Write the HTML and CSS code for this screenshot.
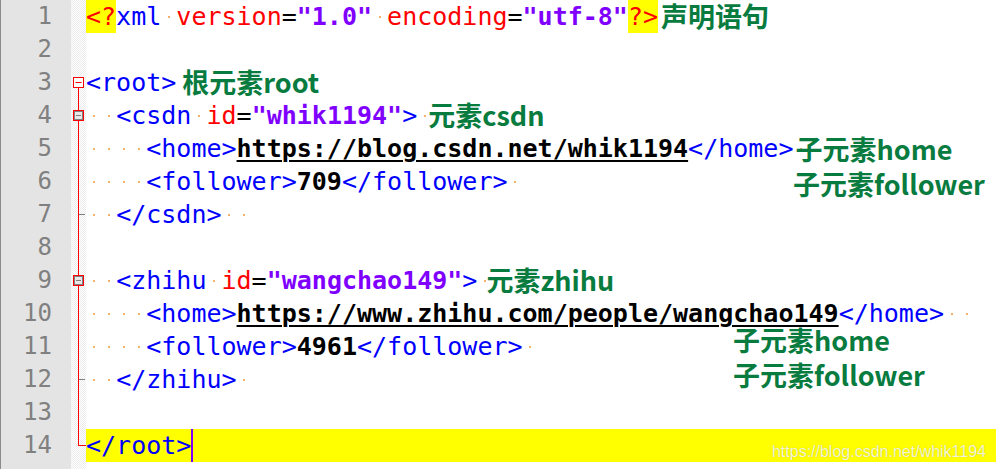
FILE: index.html
```html
<!DOCTYPE html>
<html lang="zh-CN">
<head>
<meta charset="utf-8">
<title>XML</title>
<link rel="stylesheet" href="styles.css">
</head>
<body>
<div class="editor">
  <div class="gutter">
    <div class="ln">1</div><div class="ln">2</div><div class="ln">3</div><div class="ln">4</div><div class="ln">5</div><div class="ln">6</div><div class="ln">7</div><div class="ln">8</div><div class="ln">9</div><div class="ln">10</div><div class="ln">11</div><div class="ln">12</div><div class="ln">13</div><div class="ln">14</div>
  </div>
  <div class="fold">
    <svg class="fold-svg" width="15" height="462" viewBox="0 0 15 462">
      <line x1="7.5" y1="88" x2="7.5" y2="446" stroke="#ff0000" stroke-width="1"/>
      <line x1="7" y1="445.5" x2="15" y2="445.5" stroke="#ff0000" stroke-width="1"/>
      <rect x="2.5" y="77.5" width="10" height="10" fill="#ffffff" stroke="#ff0000"/>
      <line x1="4.5" y1="82.5" x2="10.5" y2="82.5" stroke="#ff0000"/>
      <rect x="2.5" y="110.5" width="10" height="10" fill="#e8e8e8" stroke="#ff0000"/>
      <rect x="3.5" y="111.5" width="8" height="8" fill="#e8e8e8" stroke="#808080"/>
      <line x1="5" y1="115.5" x2="10" y2="115.5" stroke="#808080"/>
      <line x1="8" y1="214.5" x2="14" y2="214.5" stroke="#808080"/>
      <rect x="2.5" y="275.5" width="10" height="10" fill="#e8e8e8" stroke="#ff0000"/>
      <rect x="3.5" y="276.5" width="8" height="8" fill="#e8e8e8" stroke="#808080"/>
      <line x1="5" y1="280.5" x2="10" y2="280.5" stroke="#808080"/>
      <line x1="8" y1="379.5" x2="14" y2="379.5" stroke="#808080"/>
    </svg>
  </div>
  <div class="code">
<div class="row"><span class="hl a">&lt;?</span><span class="t">xml</span><span class="sp"> </span><span class="a">version</span><span class="e">=</span><span class="v">"1.0"</span><span class="sp"> </span><span class="a">encoding</span><span class="e">=</span><span class="v">"utf-8"</span><span class="hl a">?&gt;</span><span class="note n1">声明语句</span></div>
<div class="row"></div>
<div class="row"><span class="t">&lt;root&gt;</span><span class="note n3">根元素root</span></div>
<div class="row"><span class="sp"> </span><span class="sp"> </span><span class="t">&lt;csdn</span><span class="sp"> </span><span class="a">id</span><span class="e">=</span><span class="v">"whik1194"</span><span class="t">&gt;</span><span class="sp"> </span><span class="note n4">元素csdn</span></div>
<div class="row"><span class="sp"> </span><span class="sp"> </span><span class="sp"> </span><span class="sp"> </span><span class="t">&lt;home&gt;</span><span class="x u">https://blog.csdn.net/whik1194</span><span class="t">&lt;/home&gt;</span><span class="sp"> </span><span class="note n5">子元素home</span></div>
<div class="row"><span class="sp"> </span><span class="sp"> </span><span class="sp"> </span><span class="sp"> </span><span class="t">&lt;follower&gt;</span><span class="x">709</span><span class="t">&lt;/follower&gt;</span><span class="sp"> </span><span class="note float n6">子元素follower</span></div>
<div class="row"><span class="sp"> </span><span class="sp"> </span><span class="t">&lt;/csdn&gt;</span><span class="sp"> </span><span class="sp"> </span></div>
<div class="row"></div>
<div class="row"><span class="sp"> </span><span class="sp"> </span><span class="t">&lt;zhihu</span><span class="sp"> </span><span class="a">id</span><span class="e">=</span><span class="v">"wangchao149"</span><span class="t">&gt;</span><span class="sp"> </span><span class="note n9">元素zhihu</span></div>
<div class="row"><span class="sp"> </span><span class="sp"> </span><span class="sp"> </span><span class="sp"> </span><span class="t">&lt;home&gt;</span><span class="x u">https://www.zhihu.com/people/wangchao149</span><span class="t">&lt;/home&gt;</span><span class="sp"> </span><span class="sp"> </span></div>
<div class="row"><span class="sp"> </span><span class="sp"> </span><span class="sp"> </span><span class="sp"> </span><span class="t">&lt;follower&gt;</span><span class="x">4961</span><span class="t">&lt;/follower&gt;</span><span class="sp"> </span><span class="note float n11">子元素home</span></div>
<div class="row"><span class="sp"> </span><span class="sp"> </span><span class="t">&lt;/zhihu&gt;</span><span class="sp"> </span><span class="note float n12">子元素follower</span></div>
<div class="row"></div>
<div class="row current"><span class="t">&lt;/root&gt;</span><span class="caret"></span></div>
  </div>
  <div class="watermark">https://blog.csdn.net/whik1194</div>
</div>
</body>
</html>
```
FILE: styles.css
```css
* { box-sizing: border-box; }

html, body {
  margin: 0;
  padding: 0;
  background: #ffffff;
}

.editor {
  position: relative;
  display: flex;
  width: 996px;
  height: 469px;
  overflow: hidden;
  background: #ffffff;
}

.gutter {
  flex: 0 0 71px;
  background: #e4e4e4;
  border-left: 1px solid #8c8c8c;
  padding-right: 19px;
}

.ln {
  height: 33px;
  line-height: 33px;
  text-align: right;
  font-family: "DejaVu Sans Mono", monospace;
  font-size: 24px;
  color: #808080;
}

.fold {
  flex: 0 0 15px;
  background: repeating-conic-gradient(#ececec 0 25%, #ffffff 0 50%) 0 0 / 2px 2px;
}

.fold-svg {
  display: block;
}

.code {
  flex: 1 1 auto;
  font-family: "DejaVu Sans Mono", monospace;
  font-size: 25px;
  color: #000000;
}

.row {
  position: relative;
  height: 33px;
  line-height: 33px;
  white-space: pre;
}

.row.current {
  background: #ffff00;
}

.t { color: #0000ff; }
.a { color: #ff0000; }
.e { color: #000000; }
.v { color: #8000ff; font-weight: bold; }
.x { color: #000000; font-weight: bold; }
.u {
  text-decoration: underline;
  text-decoration-thickness: 2px;
  text-underline-offset: 3px;
}

.hl {
  display: inline-block;
  background: #ffff00;
}

.sp {
  background: linear-gradient(#f7b06c, #f7b06c) center / 2px 2px no-repeat;
}

.caret {
  display: inline-block;
  width: 2px;
  height: 33px;
  vertical-align: top;
  background: #8000ff;
}

.note {
  font-family: "Noto Sans CJK SC", "Microsoft YaHei", sans-serif;
  font-weight: 700;
  font-size: 27px;
  line-height: 20px;
  color: #087b3f;
  vertical-align: -2px;
  white-space: nowrap;
}

.n1 { margin-left: 3px; }
.n3 { margin-left: 6px; }
.n4 { margin-left: -4px; }
.n5 { margin-left: -13px; vertical-align: -3px; }
.n9 { margin-left: -6px; }

.note.float {
  position: absolute;
  line-height: 20px;
  vertical-align: baseline;
}

.n6 { left: 707px; top: 9px; }
.n11 { left: 647px; top: 0; }
.n12 { left: 647px; top: 2px; }

.watermark {
  position: absolute;
  right: 10px;
  bottom: 8px;
  font-family: "Liberation Sans", Arial, sans-serif;
  font-size: 16px;
  line-height: 18px;
  color: rgba(255, 255, 255, 0.85);
  text-shadow: 0 0 1px rgba(0, 0, 0, 0.25);
}
```
